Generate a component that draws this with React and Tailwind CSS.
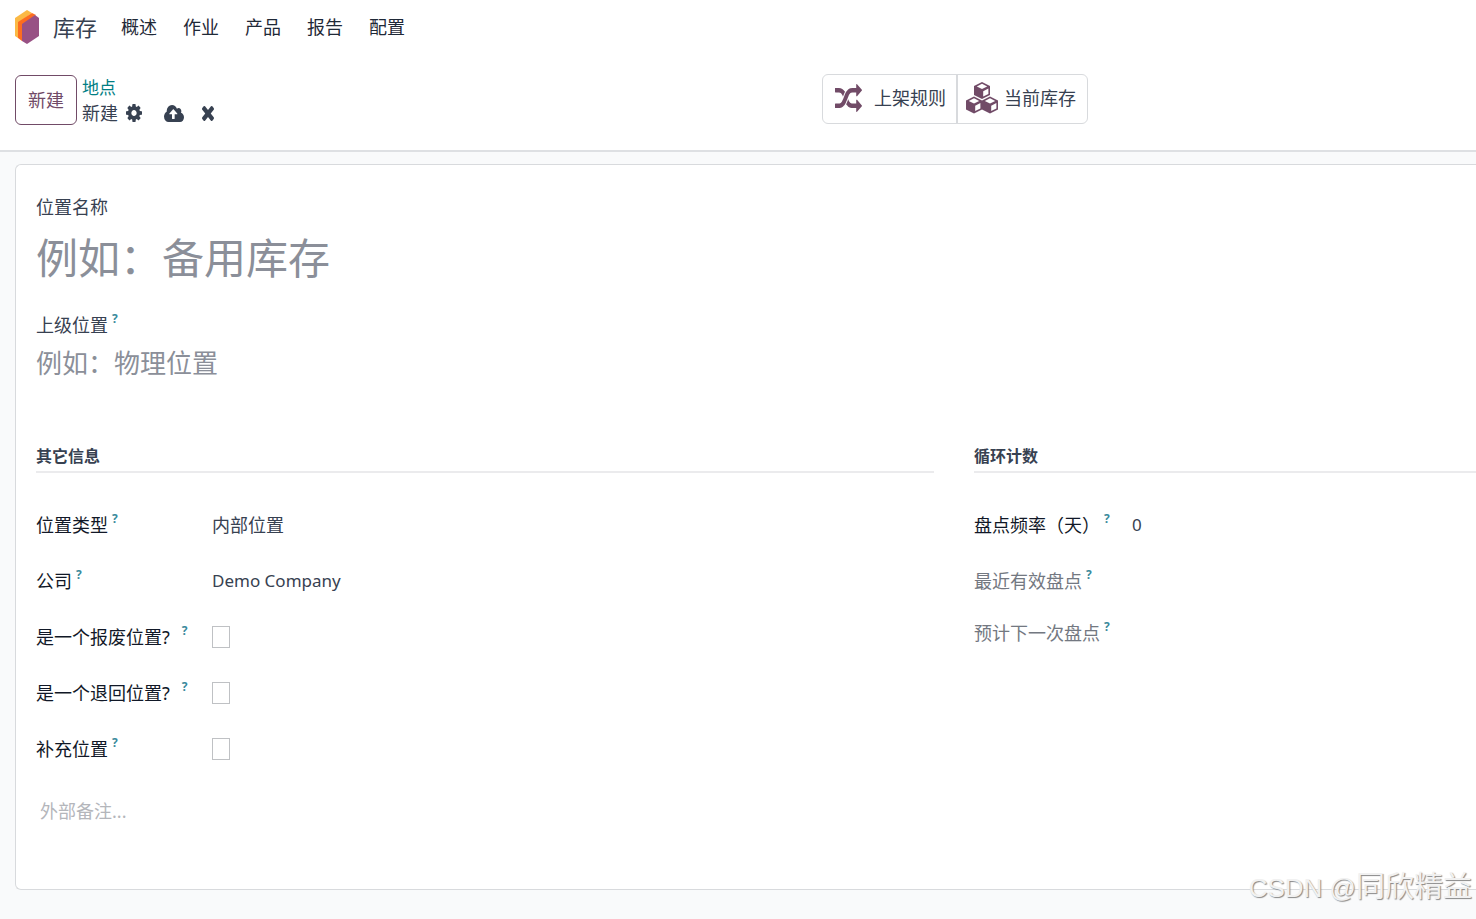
import React from 'react';

const MENU = ['概述', '作业', '产品', '报告', '配置'];

const GEAR = 'M1024 896q0 106-75 181t-181 75-181-75-75-181 75-181 181-75 181 75 75 181zm512-109v222q0 12-8 23t-20 13l-185 28q-19 54-39 91 35 50 107 138 10 12 10 25t-9 23q-27 37-99 108t-94 71q-12 0-26-9l-138-108q-44 23-91 38-16 136-29 186-7 28-36 28h-222q-14 0-24.5-8.5t-11.5-21.5l-28-184q-49-16-90-37l-141 107q-10 9-25 9-14 0-25-11-126-114-165-168-7-10-7-23 0-12 8-23 15-21 51-66.5t54-70.5q-27-50-41-99l-183-27q-13-2-21-12.5t-8-23.5v-222q0-12 8-23t19-13l186-28q14-46 39-92-40-57-107-138-10-12-10-24 0-10 9-23 26-36 98.5-107.5t94.5-71.5q13 0 26 10l138 107q44-23 91-38 16-136 29-186 7-28 36-28h222q14 0 24.5 8.5t11.5 21.5l28 184q49 16 90 37l142-107q9-9 24-9 13 0 25 10 129 119 165 170 7 8 7 22 0 12-8 23-15 21-51 66.5t-54 70.5q26 50 41 98l183 28q13 2 21 12.5t8 23.5z';
const CLOUD = 'M1280 864q0-14-9-23l-352-352q-9-9-23-9t-23 9l-351 351q-10 12-10 24 0 14 9 23t23 9h224v352q0 13 9.5 22.5t22.5 9.5h192q13 0 22.5-9.5t9.5-22.5v-352h224q13 0 22.5-9.5t9.5-22.5zm640 288q0 159-112.5 271.5t-271.5 112.5h-1088q-185 0-316.5-131.5t-131.5-316.5q0-130 70-240t188-165q-2-30-2-43 0-212 150-362t362-150q156 0 285.5 87t188.5 231q71-62 166-62 106 0 181 75t75 181q0 76-41 138 130 31 213.5 135.5t83.5 238.5z';
const TIMES = 'M1298 1322q0 40-28 68l-136 136q-28 28-68 28t-68-28l-294-294-294 294q-28 28-68 28t-68-28l-136-136q-28-28-28-68t28-68l294-294-294-294q-28-28-28-68t28-68l136-136q28-28 68-28t68 28l294 294 294-294q28-28 68-28t68 28l136 136q28 28 28 68t-28 68l-294 294 294 294q28 28 28 68z';
const RANDOM = 'M666 481q-60 92-137 273-22-45-37-72.5t-40.5-63.5-51-56.5-63-35-81.5-14.5h-224q-14 0-23-9t-9-23v-192q0-14 9-23t23-9h224q250 0 410 225zm1126 799q0 14-9 23l-320 320q-9 9-23 9-13 0-22.5-9.5t-9.5-22.5v-192q-32 0-85 .5t-81 1-73-1-71-5-64-10.5-63-18.5-58-28.5-59-40-55-53.5-56-69.5q59-93 136-273 22 45 37 72.5t40.5 63.5 51 56.5 63 35 81.5 14.5h256v-192q0-14 9-23t23-9q12 0 24 10l319 319q9 9 9 23zm0-896q0 14-9 23l-320 320q-9 9-23 9-13 0-22.5-9.5t-9.5-22.5v-192h-256q-48 0-87 15t-69 45-51 61.5-45 77.5q-32 62-78 171-29 66-49.5 111t-54 105-64 100-74 83-90 68.5-106.5 42-128 16.5h-224q-14 0-23-9t-9-23v-192q0-14 9-23t23-9h224q48 0 87-15t69-45 51-61.5 45-77.5q32-62 78-171 29-66 49.5-111t54-105 64-100 74-83 90-68.5 106.5-42 128-16.5h256v-192q0-14 9-23t23-9q12 0 24 10l319 319q9 9 9 23z';

const Glyph = ({ d, viewBox, className }) => (
  <svg viewBox={viewBox} preserveAspectRatio="none" fill="currentColor" fillRule="evenodd" className={className} aria-hidden="true">
    <path d={d} />
  </svg>
);

const Logo = () => (
  <svg viewBox="0 0 24 34" className="h-[34px] w-6" aria-hidden="true">
    <path d="M12 0 L17 3 L3 13 V28 L0 26 V8 Z" fill="#fbb945" />
    <path d="M17 3 L21 5 L7 15 V31 L3 28 V12 Z" fill="#fc6d20" />
    <path d="M20 5 L24 8 V26 L12 34 L7 31 V14 Z" fill="#985184" />
  </svg>
);

const Cube = ({ x, y }) => (
  <g transform={`translate(${x} ${y})`}>
    <path d="M8 0 L16 4 V13 L8 17 L0 13 V4 Z" fill="currentColor" />
    <path d="M8 1.8 L13.2 4.4 L8 7 L2.8 4.4 Z" fill="white" />
    <path d="M9.2 9.2 L14.4 6.6 V12 L9.2 14.6 Z" fill="white" />
  </g>
);

const Cubes = () => (
  <svg viewBox="0 0 32 32" className="h-8 w-8" aria-hidden="true">
    <Cube x={8} y={0} />
    <Cube x={0} y={14.5} />
    <Cube x={16} y={14.5} />
  </svg>
);

const Help = ({ wide }) => (
  <sup className={`${wide ? 'ml-3' : 'ml-1'} align-[3px] text-xs font-bold leading-none text-[#3a8a9c]`}>?</sup>
);

const Heading = ({ children }) => (
  <h2 className="h-[30px] border-b-2 border-[#ebebed] pt-px text-base font-bold leading-6">{children}</h2>
);

const CheckRow = ({ id, label, wide }) => (
  <div className="flex h-14 items-center">
    <label htmlFor={id} className="w-44 shrink-0 whitespace-nowrap text-[#111827]">{label}<Help wide={wide} /></label>
    <input id={id} type="checkbox" className="h-[22px] w-[18px] appearance-none border border-[#bfc1c4] bg-white" />
  </div>
);

const App = () => {
  return (
    <div className="relative min-h-screen overflow-hidden bg-[#f9fafb] pb-7 font-['Noto_Sans','Noto_Sans_CJK_SC',sans-serif] text-lg leading-7 text-[#374151]">
      <header className="h-[152px] border-b-2 border-[#dee0e3] bg-white px-[15px]">
        <nav className="flex h-[54px] items-center">
          <Logo />
          <a href="#" className="ml-3.5 text-[22px]">库存</a>
          <div className="ml-6 flex gap-[26px] text-[#1f2937]">
            {MENU.map((item) => <a key={item} href="#">{item}</a>)}
          </div>
        </nav>
        <div className="flex pt-5">
          <div className="flex flex-1 gap-[5px] pt-px">
            <button className="h-[50px] w-[62px] rounded-md border border-[#714b67] text-[#714b67]">新建</button>
            <div>
              <a href="#" className="block text-[17px] leading-[26px] text-[#017e84]">地点</a>
              <div className="flex items-center leading-6">
                <span>新建</span>
                <button aria-label="操作" className="ml-2"><Glyph d={GEAR} viewBox="0 128 1536 1536" className="h-[18px] w-4" /></button>
                <button aria-label="保存" className="ml-[22px]"><Glyph d={CLOUD} viewBox="0 128 1920 1408" className="h-[17px] w-5" /></button>
                <button aria-label="放弃" className="ml-[18px]"><Glyph d={TIMES} viewBox="110 366 1188 1188" className="h-[15px] w-3" /></button>
              </div>
            </div>
          </div>
          <div className="flex h-[50px] w-[266px] rounded-md border border-[#d8dadd]">
            <button className="flex w-[135px] items-center gap-3 border-r-2 border-[#d8dadd] pb-0.5 pl-3">
              <Glyph d={RANDOM} viewBox="0 32 1792 1600" className="h-7 w-[27px] text-[#714b67]" />
              <span>上架规则</span>
            </button>
            <button className="flex flex-1 items-center gap-1.5 pb-0.5 pl-2 text-left">
              <span className="text-[#714b67]"><Cubes /></span>
              <span>当前库存</span>
            </button>
          </div>
          <div className="w-[373px]" />
        </div>
      </header>

      <main className="ml-[15px] mt-3 rounded-l-md border border-r-0 border-[#d8dadd] bg-white pb-16 pl-5 pt-7">
        <label htmlFor="name" className="block">位置名称</label>
        <input id="name" placeholder="例如：备用库存" className="block h-[72px] w-full text-[42px] outline-none placeholder:text-[#8b8f99]" />
        <label htmlFor="parent" className="mt-[18px] block">上级位置<Help /></label>
        <input id="parent" placeholder="例如：物理位置" className="block h-12 w-full text-[26px] outline-none placeholder:text-[#8b8f99]" />

        <div className="mt-14 flex gap-10">
          <section className="flex-[898]">
            <Heading>其它信息</Heading>
            <div className="mt-6">
              <div className="flex h-14 items-center">
                <label htmlFor="type" className="w-44 text-[#111827]">位置类型<Help /></label>
                <select id="type" className="appearance-none outline-none"><option>内部位置</option></select>
              </div>
              <div className="flex h-14 items-center">
                <label htmlFor="company" className="w-44 text-[#111827]">公司<Help /></label>
                <input id="company" defaultValue="Demo Company" className="text-[17px] outline-none" />
              </div>
              <CheckRow id="scrap" label="是一个报废位置?" wide />
              <CheckRow id="return" label="是一个退回位置?" wide />
              <CheckRow id="replenish" label="补充位置" />
            </div>
            <textarea aria-label="外部备注" placeholder="外部备注..." rows={1} className="mt-5 block w-full resize-none pl-1 outline-none placeholder:text-[#b4b6bb]" />
          </section>
          <section className="flex-[502]">
            <Heading>循环计数</Heading>
            <div className="mt-6">
              <div className="flex h-14 items-center">
                <label htmlFor="freq" className="w-[158px] shrink-0 whitespace-nowrap text-[#111827]">盘点频率（天）<Help /></label>
                <input id="freq" defaultValue="0" className="w-20 text-[17px] outline-none" />
              </div>
              <div className="flex h-14 items-center text-[#737881]"><span>最近有效盘点<Help /></span></div>
              <div className="flex h-12 items-center text-[#737881]"><span>预计下一次盘点<Help /></span></div>
            </div>
          </section>
        </div>
      </main>

      <div className="absolute bottom-2.5 right-1 font-['Liberation_Sans','Noto_Sans_CJK_SC',sans-serif] text-[26px] leading-[42px] text-[#f1f1f1] [text-shadow:1px_1px_1px_#888]">
        CSDN @<span className="text-[29px]">同欣精益</span>
      </div>
    </div>
  );
};

export default App;
